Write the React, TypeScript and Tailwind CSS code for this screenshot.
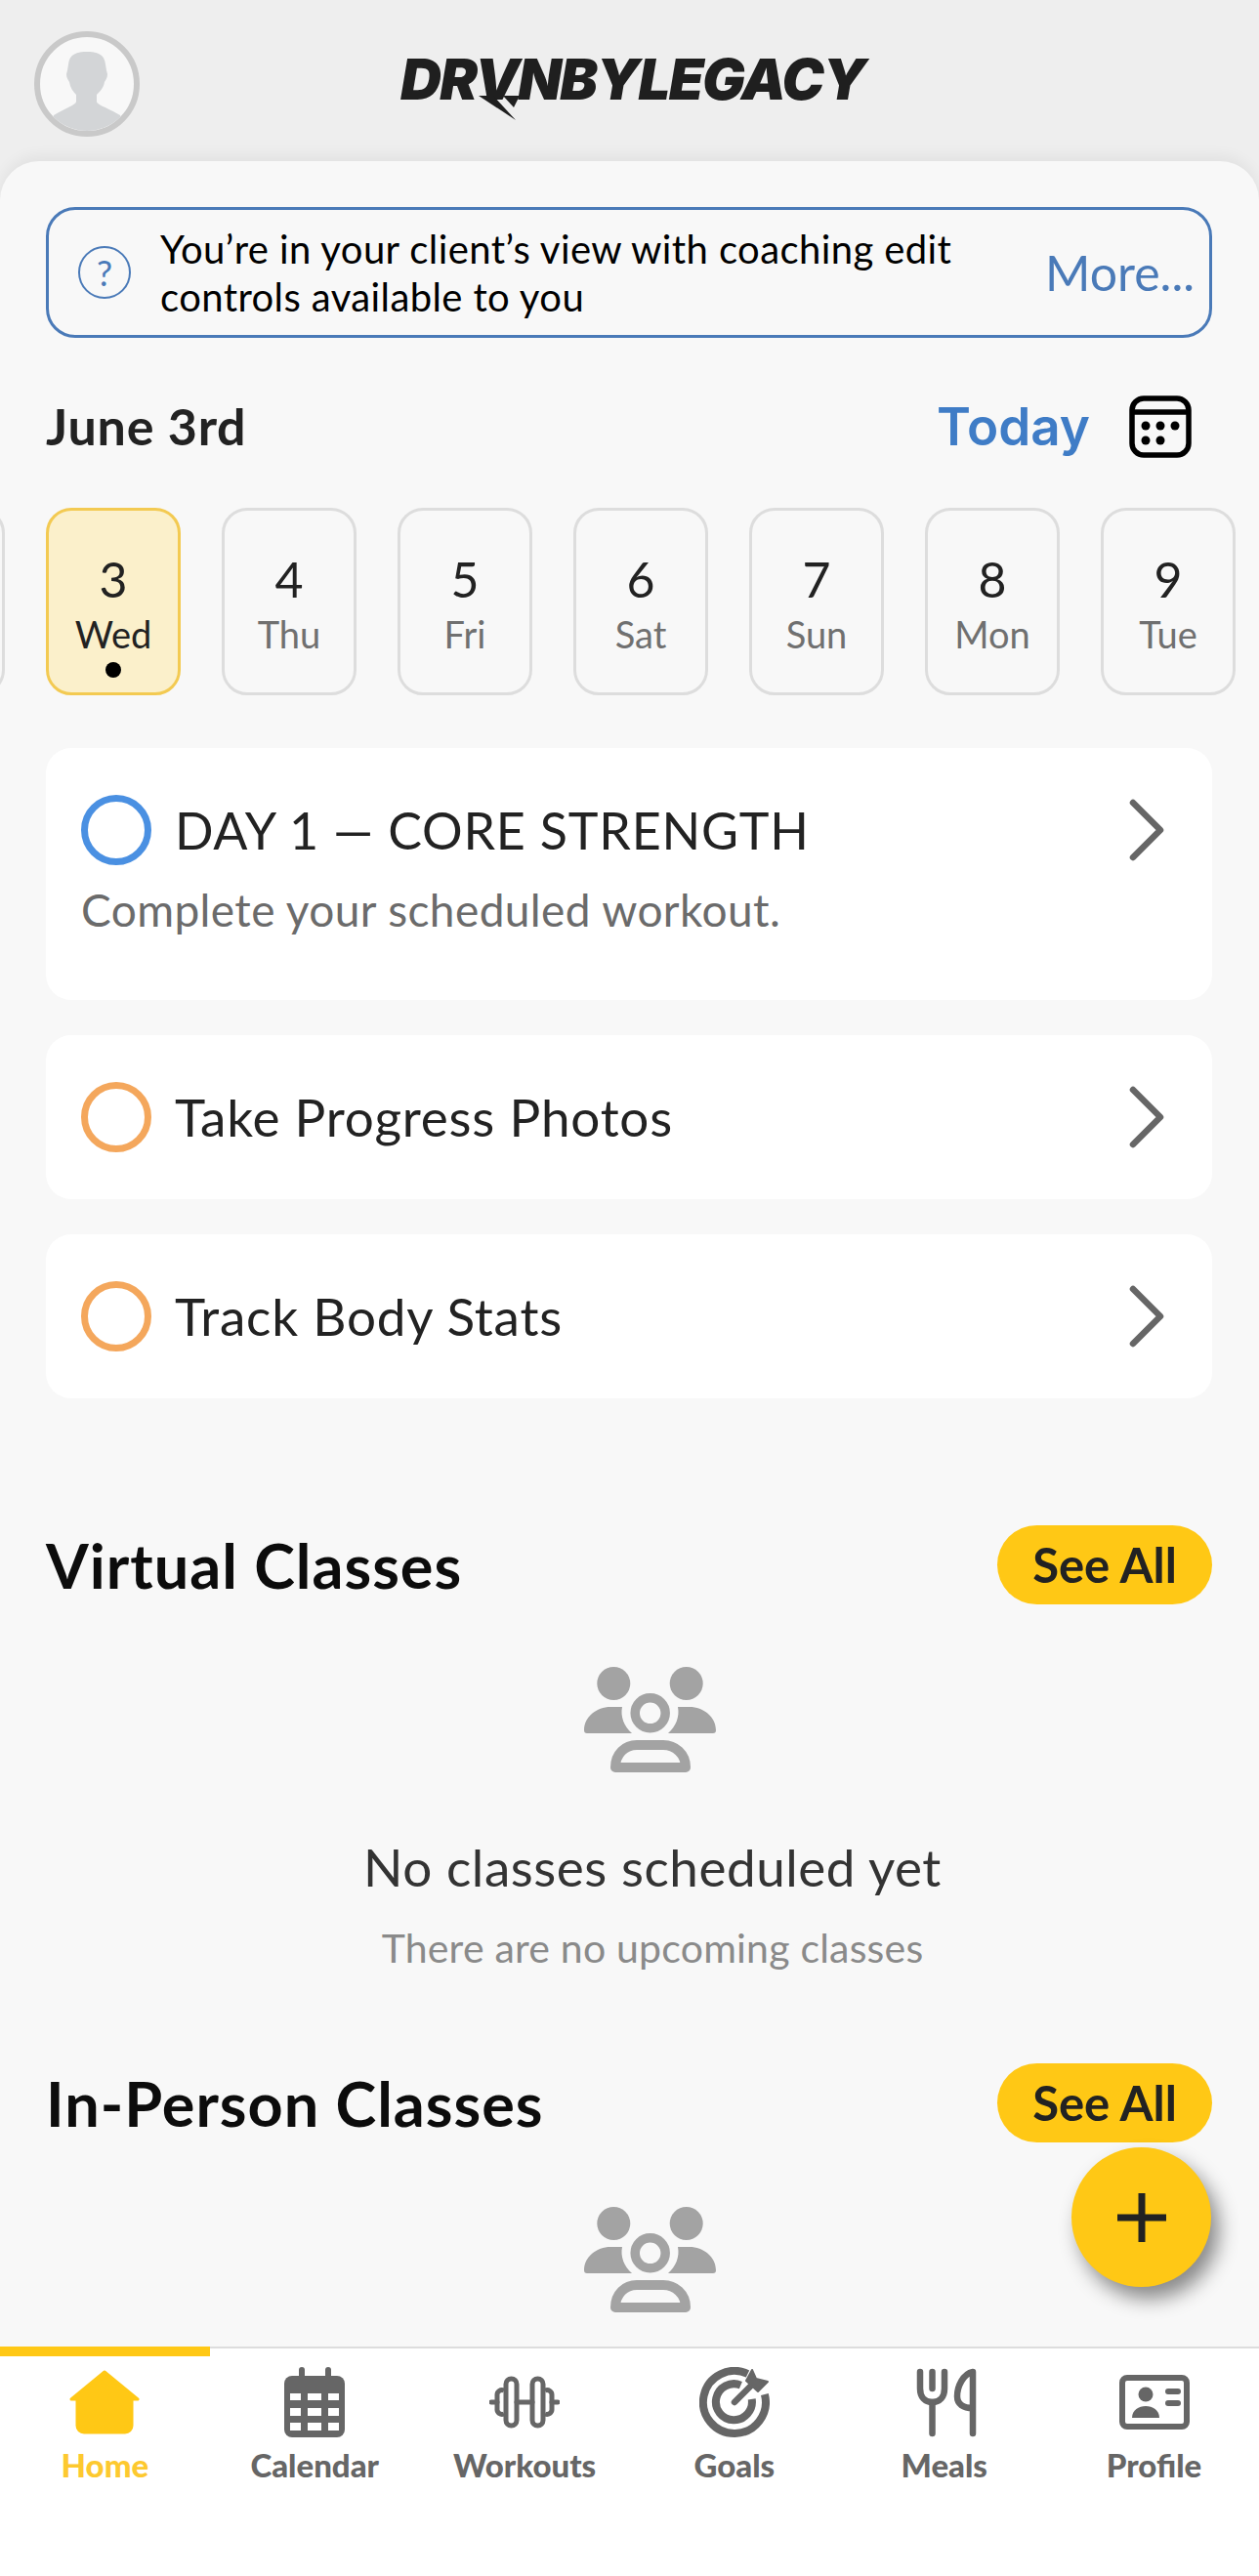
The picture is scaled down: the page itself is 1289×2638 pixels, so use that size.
import { ReactNode } from "react";

const days = [
  { n: "3", d: "Wed", active: true },
  { n: "4", d: "Thu" },
  { n: "5", d: "Fri" },
  { n: "6", d: "Sat" },
  { n: "7", d: "Sun" },
  { n: "8", d: "Mon" },
  { n: "9", d: "Tue" },
];

function Chevron() {
  return (
    <svg width="40" height="64" viewBox="0 0 40 64" fill="none" className="shrink-0">
      <path d="M6 4 L34 32 L6 60" stroke="#666" strokeWidth="6.5" strokeLinecap="round" strokeLinejoin="round" />
    </svg>
  );
}

function GroupIcon() {
  return (
    <svg width="137" height="111" viewBox="0 0 137 111" fill="#a3a3a3" className="mx-auto block">
      <circle cx="31.3" cy="18" r="17" />
      <circle cx="105.7" cy="18" r="17" />
      <circle cx="68.7" cy="48.3" r="15.5" fill="none" stroke="#a3a3a3" strokeWidth="9.5" />
      <path d="M1 66 C1 52 14 42 28 42 H40 C38 52 42 62 50 69 H4 a3 3 0 0 1 -3 -3 Z" />
      <path d="M136 66 C136 52 123 42 109 42 H97 C99 52 95 62 87 69 H133 a3 3 0 0 0 3 -3 Z" />
      <path d="M33 104 C33 90 43 81 55 81 H82 C94 81 105 90 105 104 Z" fill="none" stroke="#a3a3a3" strokeWidth="10" strokeLinejoin="round" />
    </svg>
  );
}

function TaskCard({ color, title, sub }: { color: string; title: string; sub?: string }) {
  return (
    <div className={sub ? "bg-white rounded-[26px] pl-[36px] pr-[47px] pt-[48px] h-[258px]" : "bg-white rounded-[26px] pl-[36px] pr-[47px] h-[168px] flex items-center"}>
      <div className="flex items-center w-full">
        <div className={`w-[72px] h-[72px] rounded-full border-[7px] shrink-0 ${color}`} />
        <div className={sub ? "ml-[24px] flex-1 text-[52px] leading-[72px] tracking-[0.8px] text-[#222]" : "ml-[24px] flex-1 text-[53px] leading-[72px] tracking-[0.8px] text-[#222]"}>{title}</div>
        <Chevron />
      </div>
      {sub && <div className="mt-[18px] text-[46px] leading-[56px] tracking-[0.4px] text-[#6b6b6b]">{sub}</div>}
    </div>
  );
}

function SectionHead({ title }: { title: string }) {
  return (
    <div className="flex items-center justify-between h-[81px]">
      <h2 className="text-[63px] font-bold leading-[81px] tracking-[1px] text-[#0c0c0c]">{title}</h2>
      <button className="w-[220px] h-[81px] rounded-full bg-[#ffc815] text-[49px] font-bold text-[#222]">See All</button>
    </div>
  );
}

function NavItem({ label, active, children }: { label: string; active?: boolean; children: ReactNode }) {
  return (
    <div className="relative flex flex-col items-center pt-[19px]">
      {active && <div className="absolute left-0 right-0 top-[-2px] h-[10px] bg-[#ffc815]" />}
      {children}
      <div className={`mt-[8px] text-[33px] leading-[40px] font-black ${active ? "text-[#fdc92f]" : "text-[#666]"}`}>{label}</div>
    </div>
  );
}

export default function App() {
  return (
    <div className="relative w-[1289px] h-[2638px] overflow-hidden flex flex-col bg-[#eeeeee] font-['Lato',sans-serif]">
      {/* header */}
      <header className="h-[165px] shrink-0 flex pl-[35px] pt-[32px]">
        <div className="w-[108px] h-[108px] rounded-full border-[6px] border-[#c9c9c9] bg-[#f8f8f8] overflow-hidden shrink-0">
          <svg width="96" height="96" viewBox="0 0 96 96" fill="#d3d5d7">
            <path d="M48 15 C38 15 30 17 29 28 L28 34 L27 38 C27 42 29 44 30 46 C31 52 34 56 37 59 V66 C37 69 26 73 14 80 L8 96 H88 L82 80 C70 73 58 69 58 66 V59 C61 56 65 52 66 46 C67 44 69 42 69 38 L68 34 L67 28 C66 17 58 15 48 15 Z" />
          </svg>
        </div>
        <div className="relative ml-[267px] mt-[14px] h-[70px] w-[480px]">
          <div className="font-['Inter',sans-serif] font-black italic text-[58px] leading-[70px] tracking-[-1.7px] text-[#1f1f1f] whitespace-nowrap">DRVNBYLEGACY</div>
          <svg width="70" height="54" viewBox="0 0 70 54" className="absolute left-[60px] top-[26px]">
            <path d="M20 26 L58 51 L35 26 Z" fill="#1f1f1f" />
            <path d="M45 26 L62 26 L56 38 Z" fill="#1f1f1f" />
          </svg>
        </div>
      </header>

      {/* sheet */}
      <main className="flex-1 min-h-0 overflow-hidden bg-[#f8f8f8] rounded-t-[40px] shadow-[0_-6px_14px_rgba(0,0,0,0.05)]">
        <div className="ml-[47px] mr-[48px] mt-[47px] h-[134px] rounded-[30px] border-[3px] border-[#4a7ab8] flex items-center pl-[30px] pr-[15px]">
          <div className="w-[54px] h-[54px] rounded-full border-[2px] border-[#4a7ab8] text-[#4a7ab8] text-[36px] leading-[50px] text-center shrink-0">?</div>
          <div className="ml-[30px] pt-[2px] flex-1 text-[40px] leading-[49px] tracking-[0.4px] text-black">
            You’re in your client’s view with coaching edit<br />controls available to you
          </div>
          <div className="text-[50px] text-[#4a7ab8]">More...</div>
        </div>

        <div className="ml-[47px] mr-[48px] mt-[55px] h-[72px] flex items-center justify-between">
          <div className="text-[52px] font-bold tracking-[0.8px] text-[#222] pb-[2px]">June 3rd</div>
          <div className="flex items-center pr-[21px]">
            <div className="text-[53px] font-semibold font-['Inter',sans-serif] text-[#3f7cc6] pt-[2px]">Today</div>
            <svg width="64" height="64" viewBox="0 0 64 64" fill="none" className="ml-[40px]">
              <rect x="3" y="3" width="58" height="58" rx="12" stroke="#000" strokeWidth="5.5" />
              <path d="M3 17 H61" stroke="#000" strokeWidth="5.5" />
              <g fill="#000">
                <circle cx="17" cy="31" r="4.5" /><circle cx="32" cy="31" r="4.5" /><circle cx="47" cy="31" r="4.5" />
                <circle cx="17" cy="46" r="4.5" /><circle cx="32" cy="46" r="4.5" />
              </g>
            </svg>
          </div>
        </div>

        <div className="mt-[47px] flex gap-[42px] ml-[-133px] w-[1500px]">
          <div className="w-[138px] h-[192px] rounded-[26px] border-[3px] border-[#dddddd] shrink-0" />
          {days.map((x) => (
            <div
              key={x.n}
              className={`relative w-[138px] h-[192px] rounded-[26px] border-[3px] shrink-0 flex flex-col items-center pt-[39px] ${
                x.active ? "bg-[#fbf0cb] border-[#f3ca52]" : "border-[#dddddd]"
              }`}
            >
              <div className="text-[50px] leading-[63px] text-[#222]">{x.n}</div>
              <div className={`text-[38px] leading-[48px] ${x.active ? "text-[#222]" : "text-[#707070]"}`}>{x.d}</div>
              {x.active && <div className="w-[16px] h-[16px] rounded-full bg-black mt-[5px]" />}
            </div>
          ))}
        </div>

        <div className="ml-[47px] mr-[48px] mt-[54px] flex flex-col gap-[36px]">
          <TaskCard color="border-[#4a90e2]" title="DAY 1 — CORE STRENGTH" sub="Complete your scheduled workout." />
          <TaskCard color="border-[#f4a75c]" title="Take Progress Photos" />
          <TaskCard color="border-[#f4a75c]" title="Track Body Stats" />
        </div>

        <div className="ml-[47px] mr-[48px] mt-[130px]">
          <SectionHead title="Virtual Classes" />
          <div className="pl-[48px] text-center mt-[63px]">
            <div className="pr-[6px]">
              <GroupIcon />
            </div>
            <div className="mt-[65px] text-[53px] leading-[60px] tracking-[0.55px] text-[#333]">No classes scheduled yet</div>
            <div className="mt-[29px] text-[41px] leading-[48px] tracking-[0.2px] text-[#8a8a8a]">There are no upcoming classes</div>
          </div>
        </div>

        <div className="ml-[47px] mr-[48px] mt-[94px]">
          <SectionHead title="In-Person Classes" />
          <div className="pl-[48px] pr-[6px] mt-[65px]">
            <GroupIcon />
          </div>
        </div>
      </main>

      {/* floating add button */}
      <button className="absolute left-[1097px] top-[2199px] w-[143px] h-[143px] rounded-full bg-[#ffc815] shadow-[8px_12px_20px_rgba(0,0,0,0.45)] flex items-center justify-center">
        <svg width="50" height="50" viewBox="0 0 50 50">
          <path d="M25 0 V50 M0 25 H50" stroke="#222" strokeWidth="7" />
        </svg>
      </button>

      {/* bottom nav */}
      <nav className="h-[235px] shrink-0 bg-white border-t-[2px] border-[#dddddd] grid grid-cols-6">
        <NavItem label="Home" active>
          <svg width="72" height="72" viewBox="0 0 72 72" fill="#ffc815">
            <path d="M36 5 L70 33 H64 V60 a7 7 0 0 1 -7 7 H15 a7 7 0 0 1 -7 -7 V33 H2 Z" stroke="#ffc815" strokeWidth="3" strokeLinejoin="round" />
          </svg>
        </NavItem>
        <NavItem label="Calendar">
          <svg width="72" height="72" viewBox="0 0 72 72" fill="#666">
            <rect x="20" y="0" width="6" height="14" rx="3" />
            <rect x="47" y="0" width="6" height="14" rx="3" />
            <rect x="5" y="9" width="62" height="63" rx="8" />
            <g fill="#fff">
              <rect x="11" y="27" width="11" height="7" /><rect x="29" y="27" width="14" height="7" /><rect x="50" y="27" width="11" height="7" />
              <rect x="11" y="42" width="11" height="8" /><rect x="29" y="42" width="14" height="8" /><rect x="50" y="42" width="11" height="8" />
              <rect x="11" y="57" width="11" height="8" /><rect x="29" y="57" width="14" height="8" /><rect x="50" y="57" width="11" height="8" />
            </g>
          </svg>
        </NavItem>
        <NavItem label="Workouts">
          <svg width="72" height="72" viewBox="0 0 72 72" fill="none" stroke="#666" strokeWidth="5">
            <rect x="17" y="12" width="11" height="48" rx="5.5" />
            <rect x="44" y="12" width="11" height="48" rx="5.5" />
            <path d="M15 24 a5 5 0 0 0 -7 5 V43 a5 5 0 0 0 7 5 M57 24 a5 5 0 0 1 7 5 V43 a5 5 0 0 1 -7 5" />
            <path d="M28 36 H44 M2 36 H8 M64 36 H70" strokeLinecap="round" />
          </svg>
        </NavItem>
        <NavItem label="Goals">
          <svg width="72" height="72" viewBox="0 0 72 72" fill="none" stroke="#666">
            <path d="M66.9 28 A32 32 0 1 1 49.5 7" strokeWidth="8" />
            <path d="M53.7 32.9 A18.5 18.5 0 1 1 42.4 18.6" strokeWidth="8" />
            <path d="M36 36 L54 18" strokeWidth="6.5" strokeLinecap="round" />
            <path d="M54 3 L58 12 L70 15 L60 25 L48 14 Z" fill="#666" stroke="#666" strokeWidth="2" strokeLinejoin="round" />
          </svg>
        </NavItem>
        <NavItem label="Meals">
          <svg width="72" height="72" viewBox="0 0 72 72" fill="none" stroke="#666" strokeWidth="6.5" strokeLinecap="round">
            <path d="M11 5 V22 C11 31 16 36 23.5 36 C31 36 36 31 36 22 V5" />
            <path d="M23.5 5 V22 M23.5 36 V68" />
            <path d="M65 68 V5 C55 7 49 20 49 30 C49 38 55 42 65 42" strokeLinejoin="round" />
          </svg>
        </NavItem>
        <NavItem label="Profile">
          <svg width="72" height="72" viewBox="0 0 72 72" fill="#666">
            <rect x="3" y="11" width="66" height="50" rx="5" fill="none" stroke="#666" strokeWidth="6" />
            <circle cx="27" cy="28" r="7.5" />
            <path d="M13 52 C13 44 20 40 27 40 C34 40 41 44 41 52 Z" />
            <path d="M50 25 H60 M50 37 H60" stroke="#666" strokeWidth="6" strokeLinecap="round" />
          </svg>
        </NavItem>
      </nav>
    </div>
  );
}
